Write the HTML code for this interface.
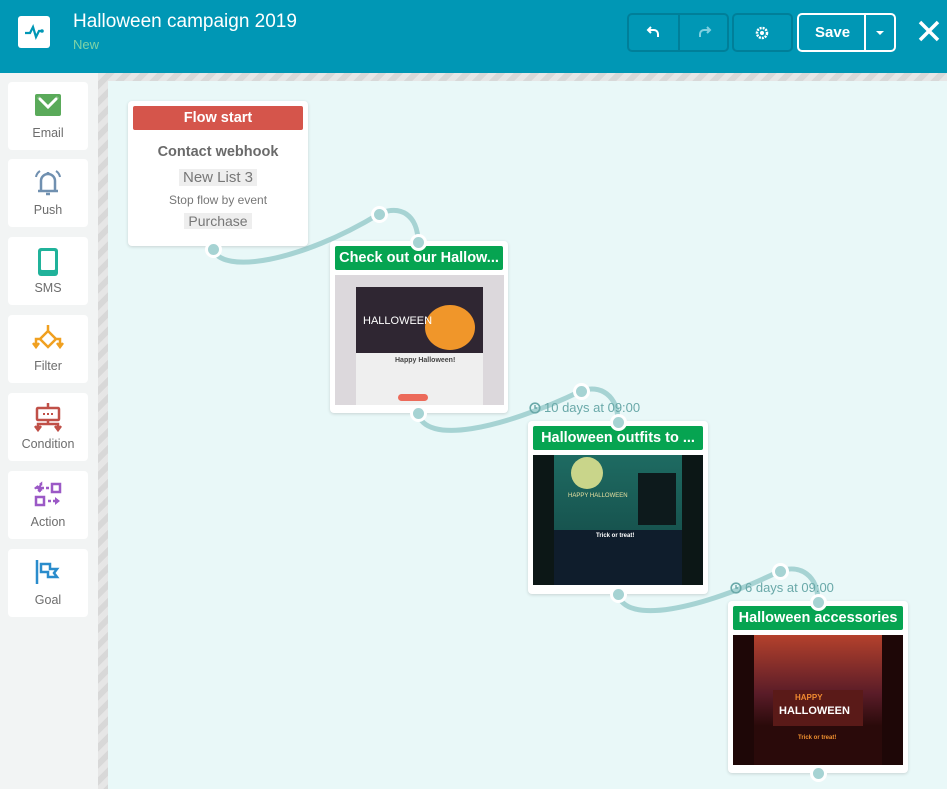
<!DOCTYPE html>
<html><head><meta charset="utf-8"><style>
*{box-sizing:border-box;margin:0;padding:0}
body{width:947px;height:789px;overflow:hidden;font-family:"Liberation Sans",sans-serif;background:#f2f4f4;position:relative}
.hdr{position:absolute;left:0;top:0;width:947px;height:73px;background:#0097b5}
.logo{position:absolute;left:18px;top:16px;width:32px;height:32px;background:#fff;border-radius:3px}
.title{position:absolute;left:73px;top:11px;color:#fff;font-size:19px}
.sub{position:absolute;left:73px;top:37px;color:#7fd3a6;font-size:13px}
.btn{position:absolute;top:13px;height:39px;border:2px solid #007f99;border-radius:5px}
.save{position:absolute;left:797px;top:13px;width:99px;height:39px;border:2px solid #fff;border-radius:5px;color:#fff;font-weight:bold;font-size:15px}
.stripe{position:absolute;background:repeating-linear-gradient(135deg,#e6e6e6 0 6px,#d8d8d8 6px 12px)}
.canvas{position:absolute;left:108px;top:81px;width:839px;height:708px;background:#e9f8f8}
.side{position:absolute;left:0;top:73px;width:98px;height:716px;background:#f2f4f4}
.tool{position:absolute;left:8px;width:80px;height:68px;background:#fff;border-radius:4px;text-align:center;color:#6d6d6d;font-size:12.5px}
.tool svg{position:absolute;left:24px;top:8px}
.tool span{position:absolute;left:0;right:0;top:44px}
.node{position:absolute;background:#fff;border-radius:4px;box-shadow:0 1px 3px rgba(0,0,0,.15)}
.nh{position:absolute;left:5px;right:5px;top:5px;height:24px;color:#fff;font-weight:bold;font-size:14.5px;text-align:center;line-height:24px;white-space:nowrap;overflow:hidden;border-radius:2px}
.img{position:absolute;left:5px;right:5px;top:34px;height:130px;overflow:hidden}
.dot{position:absolute;width:17px;height:17px;border-radius:50%;background:#a6d3d3;border:3px solid #fff;margin:-8px 0 0 -8px}
.tag{display:inline-block;background:#eee;color:#777;padding:0 4px;font-size:15px}
.time{position:absolute;color:#6aa9a9;font-size:13px;display:flex;align-items:center;gap:3px}
</style></head><body>
<div class="side"></div>
<div class="stripe" style="left:98px;top:73px;width:849px;height:8px"></div>
<div class="stripe" style="left:98px;top:73px;width:10px;height:716px"></div>
<div class="canvas"></div>

<div class="hdr">
 <div class="logo"><svg width="32" height="32"><path d="M7 17h5l3-6 3 10 3-6h3" stroke="#0097b5" stroke-width="2.2" fill="none"/><circle cx="24" cy="15" r="1.8" fill="#0097b5"/></svg></div>
 <div class="title">Halloween campaign 2019</div>
 <div class="sub">New</div>
 <div class="btn" style="left:627px;width:102px"><div style="position:absolute;left:49px;top:0;width:2px;height:35px;background:#007f99"></div>
  <svg style="position:absolute;left:17px;top:9px" width="16" height="16"><path d="M5 3L2 6l3 3M2 6h6a4 4 0 0 1 4 4v3" stroke="#fff" stroke-width="2" fill="none"/></svg>
  <svg style="position:absolute;left:67px;top:9px" width="16" height="16"><path d="M11 3l3 3-3 3M14 6H8a4 4 0 0 0-4 4v3" stroke="#7fd0e0" stroke-width="2" fill="none"/></svg></div>
 <div class="btn" style="left:732px;width:61px"><svg style="position:absolute;left:20px;top:10px" width="16" height="16"><circle cx="8" cy="8" r="5" stroke="#fff" stroke-width="2.5" fill="none" stroke-dasharray="2 1"/><circle cx="8" cy="8" r="2" fill="#fff"/></svg></div>
 <div class="save"><span style="position:absolute;left:16px;top:9px">Save</span><div style="position:absolute;left:65px;top:0;width:2px;height:35px;background:#fff"></div><div style="position:absolute;left:77px;top:16px;border:4px solid transparent;border-top-color:#fff"></div></div>
 <svg style="position:absolute;left:917px;top:19px" width="24" height="24"><path d="M3 3L21 21M21 3L3 21" stroke="#fff" stroke-width="3.5"/></svg>
</div>

<div class="tool" style="top:82px"><svg width="32" height="32"><rect x="3" y="4" width="26" height="22" rx="2" fill="#5aaa5a"/><path d="M6 7l10 10 10-10" stroke="#fff" stroke-width="3" fill="none"/><rect x="6" y="7" width="20" height="16" fill="none" stroke="#5aaa5a"/></svg><span>Email</span></div>
<div class="tool" style="top:159px"><svg width="32" height="32"><path d="M9 24V14a7 7 0 0 1 14 0v10H9zM6 24h20M16 5v2M14 27h4" stroke="#7090b0" stroke-width="2.5" fill="none"/><path d="M4 10a9 9 0 0 1 4-6M28 10a9 9 0 0 0-4-6" stroke="#7090b0" stroke-width="2" fill="none"/></svg><span>Push</span></div>
<div class="tool" style="top:237px"><svg width="32" height="32"><rect x="6" y="3" width="20" height="28" rx="3" fill="#20b29a"/><rect x="9" y="6" width="14" height="19" rx="1" fill="#fff"/></svg><span>SMS</span></div>
<div class="tool" style="top:315px"><svg width="32" height="32"><path d="M16 2v6M16 8l-8 8 8 8 8-8zM8 16H4v6M24 16h4v6M1 20l3 4 3-4M25 20l3 4 3-4" stroke="#f0a020" stroke-width="2.5" fill="none"/></svg><span>Filter</span></div>
<div class="tool" style="top:393px"><svg width="32" height="32"><path d="M16 2v4" stroke="#c05048" stroke-width="2.5"/><rect x="5" y="7" width="22" height="12" rx="1" stroke="#c05048" stroke-width="2.5" fill="none"/><path d="M16 19v4M6 28v-5h20v5M3 25l3 4 3-4M23 25l3 4 3-4" stroke="#c05048" stroke-width="2.5" fill="none"/><path d="M11 13h2M15 13h2M19 13h2" stroke="#c05048" stroke-width="2"/></svg><span>Condition</span></div>
<div class="tool" style="top:471px"><svg width="32" height="32"><path d="M4 9l5-4v8zM9 9h10M16 22h8" stroke="#9b59c6" stroke-width="2.5" stroke-dasharray="3 2" fill="#9b59c6"/><rect x="20" y="5" width="8" height="8" stroke="#9b59c6" stroke-width="2.5" fill="none"/><rect x="4" y="18" width="8" height="8" stroke="#9b59c6" stroke-width="2.5" fill="none"/><path d="M28 22l-5-4v8z" fill="#9b59c6"/></svg><span>Action</span></div>
<div class="tool" style="top:549px"><svg width="32" height="32"><path d="M5 3v24M9 7h9v5h7l-3 4 3 4h-9v-5h-7z" stroke="#2a8ccc" stroke-width="2.5" fill="none"/></svg><span>Goal</span></div>

<svg style="position:absolute;left:0;top:0" width="947" height="789"><g stroke="#a6d3d3" stroke-width="5" fill="none">
<path d="M213 249C222 275 300 262 379 214C400 204 418 215 418 242"/>
<path d="M418 413C425 445 500 430 581 391C600 384 618 395 618 422"/>
<path d="M618 594C625 625 700 610 780 571C800 564 818 575 818 602"/>
</g></svg>

<div class="node" style="left:128px;top:101px;width:180px;height:145px">
 <div class="nh" style="background:#d5554b">Flow start</div>
 <div style="position:absolute;left:0;right:0;top:43px;text-align:center;color:#6a6a6a;font-size:14.5px;font-weight:bold">Contact webhook</div>
 <div style="position:absolute;left:0;right:0;top:68px;text-align:center"><span class="tag">New List 3</span></div>
 <div style="position:absolute;left:0;right:0;top:92px;text-align:center;color:#777;font-size:12px">Stop flow by event</div>
 <div style="position:absolute;left:0;right:0;top:112px;text-align:center"><span class="tag" style="font-size:14px">Purchase</span></div>
</div>

<div class="node" style="left:330px;top:241px;width:178px;height:172px">
 <div class="nh" style="background:#06a451">Check out our Hallow...</div>
 <div class="img" style="background:#dcd8dc;height:130px;right:4px">
  <div style="position:absolute;left:21px;top:12px;width:127px;height:66px;background:#2f2632"></div>
  <div style="position:absolute;left:90px;top:30px;width:50px;height:45px;border-radius:50%;background:#f0962a"></div>
  <div style="position:absolute;left:28px;top:40px;color:#fff;font-size:11px">HALLOWEEN</div>
  <div style="position:absolute;left:21px;top:78px;width:127px;height:52px;background:#efefef"></div>
  <div style="position:absolute;left:60px;top:82px;font-size:7px;font-weight:bold;color:#444">Happy Halloween!</div>
  <div style="position:absolute;left:63px;top:119px;width:30px;height:7px;border-radius:4px;background:#ec6a5a"></div>
 </div>
</div>

<div class="time" style="left:529px;top:400px"><svg width="12" height="12"><circle cx="6" cy="6" r="4.8" stroke="#6aa9a9" stroke-width="1.6" fill="none"/><path d="M6 3v3h2" stroke="#6aa9a9" stroke-width="1.4" fill="none"/></svg>10 days at 09:00</div>
<div class="node" style="left:528px;top:421px;width:180px;height:173px">
 <div class="nh" style="background:#06a451">Halloween outfits to ...</div>
 <div class="img" style="background:#0c1716">
  <div style="position:absolute;left:21px;top:0;width:128px;height:75px;background:linear-gradient(#1e6b62,#17544f)"></div>
  <div style="position:absolute;left:38px;top:2px;width:32px;height:32px;border-radius:50%;background:#c9d58a"></div>
  <div style="position:absolute;left:105px;top:18px;width:38px;height:52px;background:#0d1a1c"></div>
  <div style="position:absolute;left:35px;top:38px;color:#e6e0a0;font-size:6px">HAPPY HALLOWEEN</div>
  <div style="position:absolute;left:21px;top:75px;width:128px;height:55px;background:#0f1d2c"></div>
  <div style="position:absolute;left:63px;top:78px;color:#fff;font-size:6px;font-weight:bold">Trick or treat!</div>
 </div>
</div>

<div class="time" style="left:730px;top:580px"><svg width="12" height="12"><circle cx="6" cy="6" r="4.8" stroke="#6aa9a9" stroke-width="1.6" fill="none"/><path d="M6 3v3h2" stroke="#6aa9a9" stroke-width="1.4" fill="none"/></svg>6 days at 09:00</div>
<div class="node" style="left:728px;top:601px;width:180px;height:172px">
 <div class="nh" style="background:#06a451">Halloween accessories</div>
 <div class="img" style="background:#1e0707">
  <div style="position:absolute;left:21px;top:0;width:128px;height:130px;background:linear-gradient(#b4412c,#5a1c28 45%,#2a0a0a 70%)"></div>
  <div style="position:absolute;left:40px;top:55px;width:90px;height:36px;background:#5a1a18"></div>
  <div style="position:absolute;left:62px;top:58px;color:#f08a30;font-size:8px;font-weight:bold">HAPPY</div>
  <div style="position:absolute;left:46px;top:70px;color:#fff;font-size:11px;font-weight:bold">HALLOWEEN</div>
  <div style="position:absolute;left:65px;top:100px;color:#f09030;font-size:6px;font-weight:bold">Trick or treat!</div>
 </div>
</div>

<div class="dot" style="left:213px;top:249px"></div>
<div class="dot" style="left:379px;top:214px"></div>
<div class="dot" style="left:418px;top:242px"></div>
<div class="dot" style="left:418px;top:413px"></div>
<div class="dot" style="left:581px;top:391px"></div>
<div class="dot" style="left:618px;top:422px"></div>
<div class="dot" style="left:618px;top:594px"></div>
<div class="dot" style="left:780px;top:571px"></div>
<div class="dot" style="left:818px;top:602px"></div>
<div class="dot" style="left:818px;top:773px"></div>
</body></html>
